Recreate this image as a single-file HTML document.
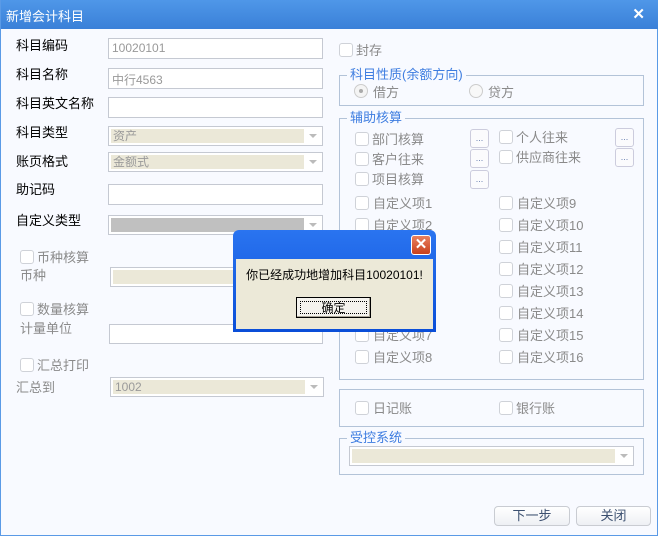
<!DOCTYPE html>
<html><head><meta charset="utf-8"><style>
*{margin:0;padding:0;box-sizing:border-box}
body{width:658px;height:536px;overflow:hidden;background:#fff;font:12px "Liberation Sans","Noto Sans CJK SC","WenQuanYi Zen Hei",sans-serif;position:relative}
.win{position:absolute;left:0;top:0;width:658px;height:536px;background:#f8faff;border:1px solid #5a9ae6;border-top:none}
.tb{position:absolute;left:0;top:0;width:658px;height:29px;background:linear-gradient(#4f97e8,#3a80d8);color:#fff;font-size:13px;padding:6px 0 0 5px}
.x{position:absolute;right:14px;top:5px;color:#fff;font-weight:bold;font-size:15px}
.a{position:absolute;white-space:nowrap;line-height:16px}
.lbl{color:#000;font-size:13px}
.g{color:#8a8a8a;font-size:13px}
.in{position:absolute;background:#fff;border:1px solid #c5c9d2}
.sel{position:absolute;background:#fff;border:1px solid #c5c9d2}
.sel .f{position:absolute;left:2px;top:2px;bottom:2px;right:18px;background:#ebe8d8;color:#9a9a9a;font-size:12px;padding-left:2px;line-height:15px}
.sel .ar{position:absolute;right:5px;top:7px;width:0;height:0;border-left:4px solid transparent;border-right:4px solid transparent;border-top:4px solid #bbb}
.cb{position:absolute;width:14px;height:14px;border:1px solid #cfd2d8;border-radius:3px;background:#fff;margin:-1px 0 0 -1px}
.fs{position:absolute;border:1px solid #b3c3d8}
.lg{position:absolute;background:#f8faff;color:#3e7de0;font-size:13px;padding:0 3px;top:-9px;left:7px;line-height:16px}
.dot{position:absolute;width:19px;height:19px;border:1px solid #ccd;border-radius:3px;background:#fbfbfd;color:#6a7fb0;font-size:9px;text-align:center;line-height:16px}
.btn{position:absolute;border:1px solid #c9ccd2;border-radius:4px;background:linear-gradient(#fff,#eef0f4);color:#3c5070;font-size:13px;text-align:center;line-height:18px}
</style></head><body>
<div class="win">
<div class="tb">新增会计科目<span class="x">✕</span></div>

<div class="a lbl" style="left:15px;top:38px">科目编码</div>
<div class="in" style="left:107px;top:38px;width:215px;height:21px;color:#999;padding:2px 3px">10020101</div>
<div class="a lbl" style="left:15px;top:67px">科目名称</div>
<div class="in" style="left:107px;top:68px;width:215px;height:21px;color:#999;padding:2px 3px">中行4563</div>
<div class="a lbl" style="left:15px;top:96px">科目英文名称</div>
<div class="in" style="left:107px;top:97px;width:215px;height:21px"></div>
<div class="a lbl" style="left:15px;top:125px">科目类型</div>
<div class="sel" style="left:107px;top:126px;width:215px;height:20px"><div class="f">资产</div><div class="ar"></div></div>
<div class="a lbl" style="left:15px;top:154px">账页格式</div>
<div class="sel" style="left:107px;top:152px;width:215px;height:20px"><div class="f">金额式</div><div class="ar"></div></div>
<div class="a lbl" style="left:15px;top:182px">助记码</div>
<div class="in" style="left:107px;top:184px;width:215px;height:21px"></div>
<div class="a lbl" style="left:15px;top:213px">自定义类型</div>
<div class="sel" style="left:107px;top:215px;width:215px;height:20px"><div class="f" style="background:#c0c0c0"></div><div class="ar"></div></div>

<div class="cb" style="left:20px;top:251px"></div><div class="a g" style="left:36px;top:250px">币种核算</div>
<div class="a g" style="left:19px;top:268px">币种</div>
<div class="sel" style="left:109px;top:267px;width:213px;height:20px"><div class="f"></div></div>
<div class="cb" style="left:20px;top:303px"></div><div class="a g" style="left:36px;top:302px">数量核算</div>
<div class="a g" style="left:19px;top:321px">计量单位</div>
<div class="in" style="left:108px;top:324px;width:214px;height:20px"></div>
<div class="cb" style="left:20px;top:359px"></div><div class="a g" style="left:36px;top:358px">汇总打印</div>
<div class="a g" style="left:15px;top:380px">汇总到</div>
<div class="sel" style="left:109px;top:377px;width:214px;height:20px"><div class="f">1002</div><div class="ar"></div></div>

<div class="cb" style="left:339px;top:44px"></div><div class="a g" style="left:355px;top:43px">封存</div>
<div class="fs" style="left:338px;top:75px;width:305px;height:31px"><div class="lg">科目性质(余额方向)</div></div>
<div class="a" style="left:353px;top:84px;width:14px;height:14px;border:1px solid #ccc;border-radius:50%;background:#f4f4f4"><div style="position:absolute;left:4px;top:4px;width:4px;height:4px;border-radius:50%;background:#aaa"></div></div>
<div class="a g" style="left:372px;top:85px">借方</div>
<div class="a" style="left:468px;top:84px;width:14px;height:14px;border:1px solid #ccc;border-radius:50%;background:#f8f8f8"></div>
<div class="a g" style="left:487px;top:85px">贷方</div>

<div class="fs" style="left:338px;top:118px;width:305px;height:262px"><div class="lg">辅助核算</div></div>
<div class="cb" style="left:355px;top:133px"></div><div class="a g" style="left:371px;top:132px">部门核算</div>
<div class="cb" style="left:355px;top:153px"></div><div class="a g" style="left:371px;top:152px">客户往来</div>
<div class="cb" style="left:355px;top:173px"></div><div class="a g" style="left:371px;top:172px">项目核算</div>
<div class="dot" style="left:469px;top:129px">...</div>
<div class="dot" style="left:469px;top:149px">...</div>
<div class="dot" style="left:469px;top:170px">...</div>
<div class="cb" style="left:499px;top:131px"></div><div class="a g" style="left:515px;top:130px">个人往来</div>
<div class="cb" style="left:499px;top:151px"></div><div class="a g" style="left:515px;top:150px">供应商往来</div>
<div class="dot" style="left:614px;top:128px">...</div>
<div class="dot" style="left:614px;top:148px">...</div>

<div class="cb" style="left:355px;top:197px"></div><div class="a g" style="left:372px;top:196px">自定义项1</div>
<div class="cb" style="left:355px;top:219px"></div><div class="a g" style="left:372px;top:218px">自定义项2</div>
<div class="cb" style="left:355px;top:241px"></div><div class="a g" style="left:372px;top:240px">自定义项3</div>
<div class="cb" style="left:355px;top:263px"></div><div class="a g" style="left:372px;top:262px">自定义项4</div>
<div class="cb" style="left:355px;top:285px"></div><div class="a g" style="left:372px;top:284px">自定义项5</div>
<div class="cb" style="left:355px;top:307px"></div><div class="a g" style="left:372px;top:306px">自定义项6</div>
<div class="cb" style="left:355px;top:329px"></div><div class="a g" style="left:372px;top:328px">自定义项7</div>
<div class="cb" style="left:355px;top:351px"></div><div class="a g" style="left:372px;top:350px">自定义项8</div>
<div class="cb" style="left:499px;top:197px"></div><div class="a g" style="left:516px;top:196px">自定义项9</div>
<div class="cb" style="left:499px;top:219px"></div><div class="a g" style="left:516px;top:218px">自定义项10</div>
<div class="cb" style="left:499px;top:241px"></div><div class="a g" style="left:516px;top:240px">自定义项11</div>
<div class="cb" style="left:499px;top:263px"></div><div class="a g" style="left:516px;top:262px">自定义项12</div>
<div class="cb" style="left:499px;top:285px"></div><div class="a g" style="left:516px;top:284px">自定义项13</div>
<div class="cb" style="left:499px;top:307px"></div><div class="a g" style="left:516px;top:306px">自定义项14</div>
<div class="cb" style="left:499px;top:329px"></div><div class="a g" style="left:516px;top:328px">自定义项15</div>
<div class="cb" style="left:499px;top:351px"></div><div class="a g" style="left:516px;top:350px">自定义项16</div>

<div class="fs" style="left:338px;top:389px;width:305px;height:38px"></div>
<div class="cb" style="left:355px;top:402px"></div><div class="a g" style="left:372px;top:401px">日记账</div>
<div class="cb" style="left:499px;top:402px"></div><div class="a g" style="left:515px;top:401px">银行账</div>

<div class="fs" style="left:338px;top:438px;width:305px;height:37px"><div class="lg">受控系统</div></div>
<div class="sel" style="left:348px;top:446px;width:285px;height:20px"><div class="f"></div><div class="ar"></div></div>

<div class="btn" style="left:493px;top:506px;width:76px;height:20px">下一步</div>
<div class="btn" style="left:575px;top:506px;width:75px;height:20px">关闭</div>
</div>

<div class="a" style="left:233px;top:230px;width:203px;height:102px;background:linear-gradient(#2a74f0,#0a4ed8);border-radius:6px 6px 0 0">
  <div style="position:absolute;left:178px;top:5px;width:20px;height:20px;background:linear-gradient(#e98060,#c8401c);border:1px solid #fff;border-radius:3px;color:#fff;font-weight:bold;text-align:center;line-height:18px;font-size:15px">✕</div>
  <div style="position:absolute;left:3px;top:29px;right:3px;bottom:3px;background:#ece9d8">
    <div style="position:absolute;left:0;right:0;top:8px;text-align:center;font-size:12px;color:#000">你已经成功地增加科目10020101!</div>
    <div style="position:absolute;left:60px;top:38px;width:75px;height:21px;border:1px solid #000;background:#f4f3ee;box-shadow:inset -1px -1px #aca899"><div style="position:absolute;left:3px;top:3px;right:3px;bottom:3px;border:1px dotted #000;text-align:center;line-height:12px;font-size:12px">确定</div></div>
  </div>
</div>
</body></html>
